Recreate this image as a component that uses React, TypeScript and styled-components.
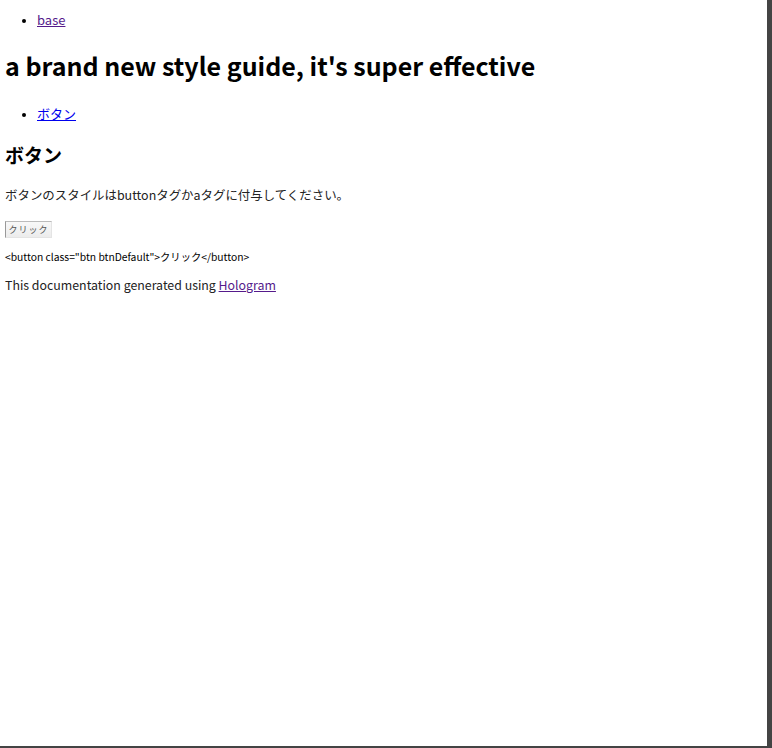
import styled, { createGlobalStyle } from "styled-components";

const GlobalStyle = createGlobalStyle`
  html, body {
    margin: 0;
    padding: 0;
    background: #444444;
  }
  body {
    font-family: "Noto Sans CJK JP", "Noto Sans", sans-serif;
  }
`;

const Page = styled.div`
  width: 767px;
  height: 746px;
  background: #ffffff;
  padding: 0 5px;
  box-sizing: border-box;
  overflow: hidden;
  color: #000;
`;

const NavList = styled.ul<{ $top: number }>`
  margin: ${(p) => p.$top}px 0 0;
  padding-left: 32px;
  font-size: 13px;
  line-height: 20px;

  li::marker {
    font-size: 11px;
  }
`;

const NavLink = styled.a<{ $visited?: boolean }>`
  color: ${(p) => (p.$visited ? "#551a8b" : "#0000ee")};
  text-decoration: underline;
`;

const Title = styled.h1`
  margin: 18px 0 0;
  font-size: 25px;
  line-height: 34px;
  font-weight: 700;
`;

const SectionTitle = styled.h2`
  margin: 18px 0 0;
  font-size: 19px;
  line-height: 26px;
  font-weight: 700;
`;

const Body = styled.p`
  margin: 17px 0 0;
  font-size: 12.45px;
  line-height: 20px;
  color: #222;
`;

const Button = styled.button`
  display: block;
  margin: 16px 0 0;
  height: 17px;
  width: 47px;
  padding: 0;
  font-family: inherit;
  font-size: 9px;
  letter-spacing: 1px;
  color: #555;
  background: linear-gradient(#f8f8f8, #ececec);
  border: 1px solid #e4e4e4;
  border-left-color: #999;
  border-top-color: #bbb;
`;

const Code = styled.p`
  margin: 11px 0 0;
  font-size: 10.3px;
  line-height: 16px;
  color: #000;
`;

const Footer = styled.p`
  margin: 10px 0 0;
  font-size: 12.36px;
  line-height: 20px;
  color: #222;
`;

export default function App() {
  return (
    <>
      <GlobalStyle />
      <Page>
        <NavList $top={10}>
          <li>
            <NavLink href="#" $visited>base</NavLink>
          </li>
        </NavList>
        <Title>a brand new style guide, it's super effective</Title>
        <NavList $top={22}>
          <li>
            <NavLink href="#">ボタン</NavLink>
          </li>
        </NavList>
        <SectionTitle>ボタン</SectionTitle>
        <Body>ボタンのスタイルはbuttonタグかaタグに付与してください。</Body>
        <Button>クリック</Button>
        <Code>{'<button class="btn btnDefault">クリック</button>'}</Code>
        <Footer>
          This documentation generated using <NavLink href="#" $visited>Hologram</NavLink>
        </Footer>
      </Page>
    </>
  );
}
